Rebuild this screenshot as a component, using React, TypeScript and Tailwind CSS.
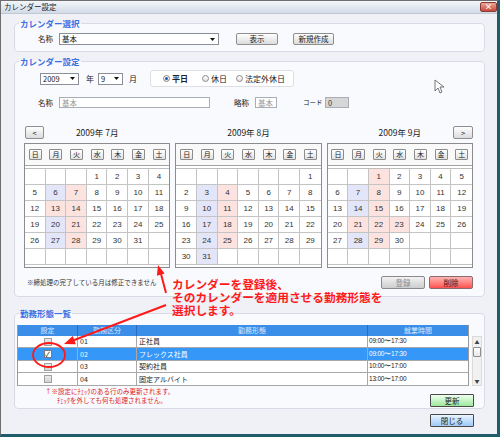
import React from "react";

type Month = { title: string; start: number; days: number; blue: number[]; pink: number[] };

const months: Month[] = [
  { title: "2009年 7月", start: 3, days: 31, blue: [6, 20, 27], pink: [7, 13, 14, 21, 28] },
  { title: "2009年 8月", start: 6, days: 31, blue: [3, 10, 17, 24, 31], pink: [4, 11, 18, 25] },
  { title: "2009年 9月", start: 2, days: 30, blue: [7, 14, 28], pink: [1, 8, 15, 21, 22, 23, 29] },
];

const weekdays = ["日", "月", "火", "水", "木", "金", "土"];

const staff = [
  { code: "01", name: "正社員", time: "09:00〜17:30", checked: false, selected: false, h: "h-[12px]" },
  { code: "02", name: "フレックス社員", time: "09:00〜17:30", checked: true, selected: true, h: "h-[13px]" },
  { code: "03", name: "契約社員", time: "10:00〜17:00", checked: false, selected: false, h: "h-[12px]" },
  { code: "04", name: "固定アルバイト", time: "13:00〜17:00", checked: false, selected: false, h: "h-[13px]" },
];

const btn =
  "flex items-center justify-center h-[12px] border border-[#8e8e8e] rounded-[2px] bg-linear-to-b from-[#fefefe] to-[#dcdcdc] text-[7.5px] leading-none text-[#222]";

function Caret() {
  return (
    <svg width="5" height="3" viewBox="0 0 5 3">
      <path d="M0 0h5L2.5 3z" fill="#111" />
    </svg>
  );
}

function Select({ value, className }: { value: string; className: string }) {
  return (
    <div
      className={`flex items-center justify-between h-[12px] border border-[#8a8f99] bg-white pl-[2px] pr-[3px] text-[7.5px] leading-none ${className}`}
    >
      <span>{value}</span>
      <Caret />
    </div>
  );
}

function Radio({ on }: { on?: boolean }) {
  return (
    <span className="flex items-center justify-center w-[7px] h-[7px] rounded-full border border-[#8a8a8a] bg-linear-to-b from-white to-[#e2e2e2]">
      {on && <span className="w-[3px] h-[3px] rounded-full bg-[#2657b0]" />}
    </span>
  );
}

function Calendar({ m }: { m: Month }) {
  const cells: (number | null)[] = [];
  for (let i = 0; i < 42; i++) {
    const d = i - m.start + 1;
    cells.push(d >= 1 && d <= m.days ? d : null);
  }
  return (
    <div className="border border-[#8c8c8c] bg-white pb-[2px]">
      <div className="grid grid-cols-7 h-[22px] items-center border-b border-[#a4a4a4] bg-[#f9f9f9]">
        {weekdays.map((w) => (
          <div key={w} className="flex justify-center">
            <span className="flex items-center justify-center w-[13px] h-[11px] border border-[#8c8c8c] rounded-[1px] bg-linear-to-b from-white to-[#e2e2e2] text-[7px] leading-none">
              {w}
            </span>
          </div>
        ))}
      </div>
      <div className="mt-[2px] grid grid-cols-7 border-t border-[#bdbdbd]">
        {cells.map((d, i) => {
          let bg = "bg-white";
          if (d && m.blue.includes(d)) bg = "bg-[#e3e5f8]";
          if (d && m.pink.includes(d)) bg = "bg-[#fde3df]";
          return (
            <div
              key={i}
              className={`h-[16px] flex items-center justify-center border-b border-[#c4c4c4] ${
                i % 7 !== 6 ? "border-r" : ""
              } ${bg} font-['Liberation_Sans',sans-serif] text-[8px] text-[#333]`}
            >
              {d ?? ""}
            </div>
          );
        })}
      </div>
    </div>
  );
}

export default function App() {
  return (
    <div className="relative w-[500px] h-[437px] overflow-hidden bg-[#eff1f6] border-t border-l border-[#6e6e6e] border-r-[3px] border-b-[3px] border-r-[#1e5d69] border-b-[#1e5d69] font-['Noto_Sans_CJK_JP',sans-serif] text-[#222]">
      {/* title bar */}
      <div className="h-[13px] flex items-center justify-between pl-[3px] bg-linear-to-b from-[#f3f6fa] to-[#d3dbe7] border-b border-[#c0c8d4]">
        <span className="text-[7.5px] leading-none">カレンダー設定</span>
        <div className="w-[17px] h-[10px] rounded-[2px] border border-[#8b3a3a] bg-linear-to-b from-[#eaa596] to-[#c8453a] flex items-center justify-center text-white text-[8px] font-bold leading-none">
          ×
        </div>
      </div>

      <div className="flex flex-col pl-[13px] pr-[12px]">
        {/* カレンダー選択 */}
        <fieldset className="mt-[3px] border border-[#d8dbe5] rounded-[4px] bg-[#f9fafd] px-[4px] pb-[6px]">
          <legend className="px-[1px] text-[8.5px] font-bold leading-[13px] text-[#3b6fe3]">カレンダー選択</legend>
          <div className="pt-[3px] flex items-center h-[15px]">
            <span className="ml-[19px] w-[15px] text-[7.5px] leading-none">名称</span>
            <Select value="基本" className="ml-[6px] w-[160px]" />
            <div className={`${btn} ml-[17px] w-[42px]`}>表示</div>
            <div className={`${btn} ml-[15px] w-[41px]`}>新規作成</div>
          </div>
        </fieldset>

        {/* カレンダー設定 */}
        <fieldset className="mt-[3px] border border-[#d8dbe5] rounded-[4px] bg-[#f9fafd] px-[4px] pb-[7px]">
          <legend className="px-[1px] text-[8.5px] font-bold leading-[13px] text-[#3b6fe3]">カレンダー設定</legend>
          <div className="mt-[2px] flex items-center h-[17px]">
            <Select value="2009" className="ml-[21px] w-[39px]" />
            <span className="ml-[7px] text-[8px] leading-none">年</span>
            <Select value="9" className="ml-[4px] w-[25px]" />
            <span className="ml-[6px] text-[8px] leading-none">月</span>
            <div className="ml-[13px] w-[144px] h-[17px] flex items-center pl-[12px] border border-[#dcdfe6] rounded-[3px] bg-white text-[8px] leading-none">
              <Radio on />
              <span className="ml-[2px] font-bold">平日</span>
              <span className="ml-[14px]">
                <Radio />
              </span>
              <span className="ml-[2px]">休日</span>
              <span className="ml-[9px]">
                <Radio />
              </span>
              <span className="ml-[2px]">法定外休日</span>
            </div>
          </div>
          <div className="mt-[10px] flex items-center h-[11px] text-[7.5px] leading-none">
            <span className="ml-[19px] w-[15px]">名称</span>
            <div className="ml-[6px] w-[151px] h-[11px] flex items-center px-[2px] border border-[#a9adb5] bg-white text-[#9a9a9a]">
              基本
            </div>
            <span className="ml-[24px] w-[15px]">略称</span>
            <div className="ml-[6px] w-[22px] h-[11px] flex items-center px-[2px] border border-[#a9adb5] bg-white text-[#9a9a9a]">
              基本
            </div>
            <span className="ml-[26px] w-[22px] whitespace-nowrap text-[6.5px]">コード</span>
            <div className="w-[24px] h-[11px] flex items-center px-[2px] border border-[#a9adb5] bg-[#d6d6d6] text-[#444]">
              0
            </div>
          </div>

          <div className="ml-[5px] w-[449px]">
            <div className="mt-[18px] grid grid-cols-3 gap-[5px] h-[13px]">
              {months.map((m, i) => (
                <div key={m.title} className="grid grid-cols-[20px_1fr_20px] items-center">
                  <div>{i === 0 && <div className={`${btn} w-[19px] h-[13px] ml-[1px]`}>&lt;</div>}</div>
                  <span className="text-center text-[8.5px] leading-none">{m.title}</span>
                  <div>{i === 2 && <div className={`${btn} w-[20px] h-[13px]`}>&gt;</div>}</div>
                </div>
              ))}
            </div>
            <div className="mt-[4px] grid grid-cols-3 gap-[5px]">
              {months.map((m) => (
                <Calendar key={m.title} m={m} />
              ))}
            </div>
            <div className="mt-[8px] h-[13px] flex items-center justify-between">
              <span className="ml-[3px] text-[6.5px] leading-none text-[#333]">※締処理の完了している月は修正できません</span>
              <div className="flex gap-[4px]">
                <div className="flex items-center justify-center w-[44px] h-[13px] border border-[#8a8a8a] rounded-[2px] bg-linear-to-b from-[#f3f3f3] to-[#cdcdcd] text-[7.5px] leading-none text-[#8a8a8a]">
                  登録
                </div>
                <div className="flex items-center justify-center w-[44px] h-[13px] border border-[#8a6a6a] rounded-[2px] bg-linear-to-b from-[#ffb3b3] to-[#ff4f4f] text-[7.5px] leading-none text-[#4a1010]">
                  削除
                </div>
              </div>
            </div>
          </div>
        </fieldset>

        {/* 勤務形態一覧 */}
        <fieldset className="mt-[10px] border border-[#d8dbe5] rounded-[4px] bg-[#f9fafd] px-[2px] pb-[1px]">
          <legend className="ml-[2px] px-[1px] text-[8.5px] font-bold leading-[13px] text-[#3b6fe3]">勤務形態一覧</legend>
          <div className="pt-[5px] flex">
            <div className="w-[452px] border-l border-r border-[#9a9a9a] text-[7px] leading-none">
              <div className="grid grid-cols-[60px_59px_231px_1fr] h-[11px] bg-[#3b8ee8] text-[#dbe9ff]">
                <div className="flex items-center justify-center border-r border-[#2a6cc0]">設定</div>
                <div className="flex items-center justify-center border-r border-[#2a6cc0]">勤務区分</div>
                <div className="flex items-center justify-center border-r border-[#2a6cc0]">勤務形態</div>
                <div className="flex items-center justify-center">就業時間</div>
              </div>
              {staff.map((r) => (
                <div
                  key={r.code}
                  className={`grid grid-cols-[60px_59px_231px_1fr] ${r.h} border-b border-[#a8a8a8] ${
                    r.selected ? "bg-[#3597f8] text-white" : "bg-white text-[#222]"
                  }`}
                >
                  <div className="flex items-center justify-center border-r border-[#a8a8a8]">
                    {r.checked ? (
                      <span className="flex items-center justify-center w-[8px] h-[8px] border border-[#7a7a7a] bg-white text-[7px] text-[#222]">
                        ✓
                      </span>
                    ) : (
                      <span className="w-[8px] h-[8px] border border-[#a0a0a0] bg-linear-to-b from-[#ececec] to-[#d2d2d2]" />
                    )}
                  </div>
                  <div className="flex items-center pl-[2px] border-r border-[#a8a8a8]">{r.code}</div>
                  <div className="flex items-center pl-[2px] border-r border-[#a8a8a8]">{r.name}</div>
                  <div className="flex items-center pl-[1px] font-['Liberation_Sans',sans-serif] text-[6.5px] tracking-[-0.2px]">
                    {r.time}
                  </div>
                </div>
              ))}
            </div>
            <div className="mt-[11px] ml-[3px] w-[10px] h-[50px] flex flex-col items-center border border-[#dadada] bg-[#f1f1f1]">
              <span className="mt-[2px] text-[5px] leading-none text-[#444]">▲</span>
              <span className="mt-[3px] w-[8px] h-[10px] border border-[#8d8d8d] rounded-[1px] bg-linear-to-b from-white to-[#e8e8e8]" />
              <span className="mt-auto mb-[2px] text-[5px] leading-none text-[#444]">▼</span>
            </div>
          </div>
          <div className="flex items-start justify-between">
            <div className="ml-[28px] mt-[1px] text-[6.5px] leading-[9px] text-[#e01b1b]">
              <div>↑※設定にﾁｪｯｸのある行のみ更新されます。</div>
              <div className="ml-[12px]">ﾁｪｯｸを外しても何も処理されません。</div>
            </div>
            <div className="mt-[8px] mr-[8px] flex items-center justify-center w-[44px] h-[13px] border border-[#4a4a4a] rounded-[1px] bg-linear-to-b from-[#efffef] to-[#9de89d] text-[7.5px] leading-none">
              更新
            </div>
          </div>
        </fieldset>

        <div className="mt-[5px] mr-[11px] self-end flex items-center justify-center w-[44px] h-[13px] border border-[#4a4a4a] rounded-[1px] bg-linear-to-b from-[#eaf4ff] to-[#9ec9f6] text-[7.5px] leading-none">
          閉じる
        </div>
      </div>

      {/* annotation overlay */}
      <svg className="absolute left-0 top-0 pointer-events-none" width="496" height="433" viewBox="1 1 496 433">
        <line x1="166" y1="293" x2="161" y2="274" stroke="#ff1a1a" strokeWidth="2" />
        <polygon points="158,265 164.6,273.5 156.9,275.7" fill="#ff1a1a" />
        <line x1="166" y1="305" x2="73" y2="340.5" stroke="#ff1a1a" strokeWidth="2" />
        <polygon points="64,344 75.9,344.3 72.7,335.9" fill="#ff1a1a" />
        <ellipse cx="49" cy="355" rx="16" ry="12" fill="none" stroke="#ff1a1a" strokeWidth="1.8" />
        <path d="M435 80 L435 91 L438 88 L440 93 L442 92 L440 87 L444 87 Z" fill="#fff" stroke="#555" strokeWidth="0.8" />
      </svg>
      <div className="absolute left-[171px] top-[276px] text-[11.7px] leading-[13px] font-semibold text-[#ff1a1a] whitespace-nowrap">
        <div className="h-[13px]">カレンダーを登録後、</div>
        <div className="h-[13px]">そのカレンダーを適用させる勤務形態を</div>
        <div className="h-[13px]">選択します。</div>
      </div>
    </div>
  );
}
